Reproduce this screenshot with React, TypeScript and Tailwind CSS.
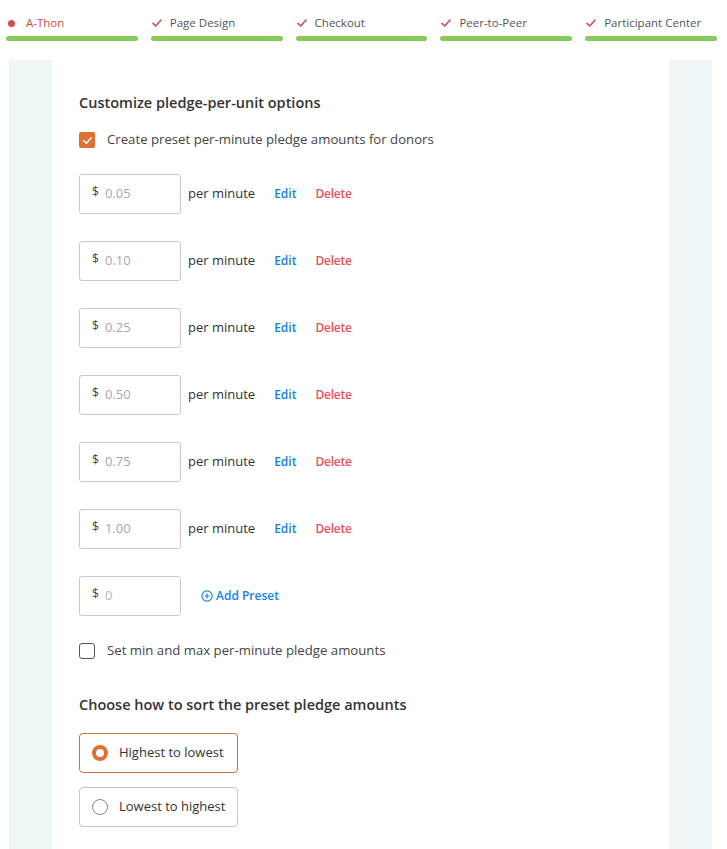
import React, { useState } from 'react';

const steps = [
  { label: 'A-Thon', current: true },
  { label: 'Page Design' },
  { label: 'Checkout' },
  { label: 'Peer-to-Peer' },
  { label: 'Participant Center' },
];

const presets = ['0.05', '0.10', '0.25', '0.50', '0.75', '1.00'];

const Check = ({ className, w = 1.8 }: { className?: string; w?: number }) => (
  <svg viewBox="0 0 12 12" className={className} fill="none" stroke="currentColor" strokeWidth={w} strokeLinecap="round" strokeLinejoin="round">
    <path d="M2 6.3 4.8 9 10 3" />
  </svg>
);

const AmountBox = ({ value, muted }: { value: string; muted?: boolean }) => (
  <div className="w-[102px] h-[40px] border border-[#c9c9c9] rounded-[3px] flex items-center pl-[12px] bg-white">
    <span className="text-[12px] text-[#444] -mt-[4px]">$</span>
    <span className={`ml-[6px] text-[13px] ${muted ? 'text-[#b5b5b5]' : 'text-[#a8a8a8]'}`}>{value}</span>
  </div>
);

export default function App() {
  const [sort, setSort] = useState<'high' | 'low'>('high');

  return (
    <div className="min-h-[849px] bg-white text-[#333]" style={{ fontFamily: '"Open Sans", "Noto Sans", sans-serif' }}>
      <div className="flex gap-[13px] pl-[6px] pr-[10px] pt-[14px]">
        {steps.map((s) => (
          <div key={s.label} className="flex-1">
            <div className="flex items-center h-[18px]">
              {s.current ? (
                <span className="w-[7px] h-[7px] rounded-full bg-[#d24b4b] ml-[2px] mr-[11px]" />
              ) : (
                <Check w={1.6} className="w-[12px] h-[12px] text-[#d24b5a] ml-0 mr-[7px]" />
              )}
              <span className={`text-[11.5px] ${s.current ? 'text-[#c8503c] font-medium' : 'text-[#555]'}`}>{s.label}</span>
            </div>
            <div className="mt-[4px] h-[5px] rounded-full bg-[#85c95b]" />
          </div>
        ))}
      </div>

      <div className="pl-[9px] pr-[15px] mt-[19px]">
        <div className="bg-[#eef6f8] px-[43px]">
          <div className="bg-white px-[27px] pt-[33px] pb-[24px] min-h-[790px]">
            <h2 className="text-[14.5px] font-semibold text-[#333] leading-[20px]">Customize pledge-per-unit options</h2>

            <label className="flex items-center mt-[17px] h-[20px]">
              <span className="w-[16px] h-[16px] rounded-[2px] bg-[#e0702f] flex items-center justify-center">
                <Check className="w-[11px] h-[11px] text-white" />
              </span>
              <span className="ml-[12px] text-[13.2px] text-[#444]">Create preset per-minute pledge amounts for donors</span>
            </label>

            <div className="mt-[24px] flex flex-col gap-[27px]">
              {presets.map((p) => (
                <div key={p} className="flex items-center">
                  <AmountBox value={p} />
                  <span className="ml-[7px] text-[13px] text-[#333]">per minute</span>
                  <button className="ml-[19px] text-[12px] font-semibold text-[#1a7fe0]">Edit</button>
                  <button className="ml-[19px] text-[12px] font-semibold tracking-[-0.2px] text-[#e8505a]">Delete</button>
                </div>
              ))}
              <div className="flex items-center">
                <AmountBox value="0" muted />
                <button className="ml-[20px] flex items-center text-[12px] font-semibold text-[#1a7fe0]">
                  <svg viewBox="0 0 14 14" className="w-[12px] h-[12px] mr-[3px]" fill="none" stroke="currentColor" strokeWidth="1.3">
                    <circle cx="7" cy="7" r="6" />
                    <path d="M7 4v6M4 7h6" />
                  </svg>
                  Add Preset
                </button>
              </div>
            </div>

            <label className="flex items-center mt-[25px] h-[20px]">
              <span className="w-[16px] h-[16px] rounded-[3px] border border-[#555] bg-white" />
              <span className="ml-[12px] text-[13.2px] text-[#444]">Set min and max per-minute pledge amounts</span>
            </label>

            <h2 className="mt-[34px] text-[14.5px] font-semibold text-[#333] leading-[20px]">Choose how to sort the preset pledge amounts</h2>

            <div className="mt-[18px] flex flex-col gap-[14px]">
              {([
                ['high', 'Highest to lowest'],
                ['low', 'Lowest to highest'],
              ] as const).map(([k, label]) => (
                <button
                  key={k}
                  onClick={() => setSort(k)}
                  className={`w-[159px] h-[40px] flex items-center pl-[12px] rounded-[4px] border bg-white text-left ${sort === k ? 'border-[#c8723f]' : 'border-[#c4c4c4]'}`}
                >
                  {sort === k ? (
                    <span className="w-[16px] h-[16px] rounded-full border-[4px] border-[#e0702f] bg-white" />
                  ) : (
                    <span className="w-[16px] h-[16px] rounded-full border border-[#8a8a8a] bg-white" />
                  )}
                  <span className="ml-[11px] text-[13px] text-[#333]">{label}</span>
                </button>
              ))}
            </div>
          </div>
        </div>
      </div>
    </div>
  );
}
